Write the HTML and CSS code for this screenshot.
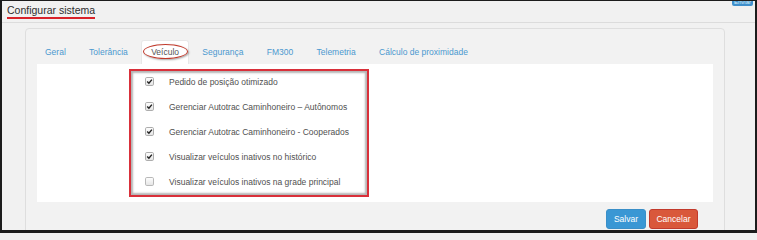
FILE: index.html
```html
<!DOCTYPE html>
<html lang="pt">
<head>
<meta charset="utf-8">
<title>Configurar sistema</title>
<link rel="stylesheet" href="styles.css">
</head>
<body>
<div class="frame">
  <header class="header">
    <h1 class="title"><span class="title-text">Configurar sistema</span></h1>
    <span class="top-btn">Enviar</span>
  </header>
  <section class="panel">
    <nav class="tabs">
      <a class="tab">Geral</a>
      <a class="tab">Tolerância</a>
      <a class="tab active">Veículo<span class="ring"></span></a>
      <a class="tab">Segurança</a>
      <a class="tab">FM300</a>
      <a class="tab">Telemetria</a>
      <a class="tab">Cálculo de proximidade</a>
    </nav>
    <div class="content">
      <div class="options">
        <label class="opt"><svg class="cb" viewBox="0 0 9 9" width="9" height="9"><defs><linearGradient id="g" x1="0" y1="0" x2="0" y2="1"><stop offset="0" stop-color="#ffffff"/><stop offset="1" stop-color="#e4e4e4"/></linearGradient></defs><rect x="0.5" y="0.5" width="8" height="8" rx="1.3" fill="url(#g)" stroke="#adadad"/><path d="M2.2 4.6 L3.9 6.3 L6.9 2.6" fill="none" stroke="#222" stroke-width="1.4"/></svg><span>Pedido de posição otimizado</span></label>
        <label class="opt"><svg class="cb" viewBox="0 0 9 9" width="9" height="9"><rect x="0.5" y="0.5" width="8" height="8" rx="1.3" fill="url(#g)" stroke="#adadad"/><path d="M2.2 4.6 L3.9 6.3 L6.9 2.6" fill="none" stroke="#222" stroke-width="1.4"/></svg><span>Gerenciar Autotrac Caminhoneiro – Autônomos</span></label>
        <label class="opt"><svg class="cb" viewBox="0 0 9 9" width="9" height="9"><rect x="0.5" y="0.5" width="8" height="8" rx="1.3" fill="url(#g)" stroke="#adadad"/><path d="M2.2 4.6 L3.9 6.3 L6.9 2.6" fill="none" stroke="#222" stroke-width="1.4"/></svg><span>Gerenciar Autotrac Caminhoneiro - Cooperados</span></label>
        <label class="opt"><svg class="cb" viewBox="0 0 9 9" width="9" height="9"><rect x="0.5" y="0.5" width="8" height="8" rx="1.3" fill="url(#g)" stroke="#adadad"/><path d="M2.2 4.6 L3.9 6.3 L6.9 2.6" fill="none" stroke="#222" stroke-width="1.4"/></svg><span>Visualizar veículos inativos no histórico</span></label>
        <label class="opt"><svg class="cb" viewBox="0 0 9 9" width="9" height="9"><rect x="0.5" y="0.5" width="8" height="8" rx="1.3" fill="url(#g)" stroke="#b8b8b8"/></svg><span>Visualizar veículos inativos na grade principal</span></label>
      </div>
    </div>
    <div class="actions">
      <button class="btn btn-save">Salvar</button>
      <button class="btn btn-cancel">Cancelar</button>
    </div>
  </section>
</div>
</body>
</html>
```
FILE: styles.css
```css
* { box-sizing: border-box; }
html, body { margin: 0; padding: 0; }
body {
  width: 757px;
  height: 233px;
  overflow: hidden;
  font-family: "Liberation Sans", Arial, sans-serif;
  background: #f1f1f1;
}
.frame {
  width: 757px;
  height: 233px;
  overflow: hidden;
  border-style: solid;
  border-color: #1c1c1c;
  border-width: 1px 2px 3px 2px;
  background: #f1f1f1;
}
.header {
  display: flex;
  justify-content: space-between;
  align-items: flex-start;
  height: 22px;
  border-bottom: 1px solid #dcdcdc;
  padding-left: 5px;
}
.title {
  margin: 3px 0 0 0;
  font-size: 10.5px;
  line-height: 12px;
  font-weight: normal;
  color: #2e2e2e;
}
.title-text {
  display: inline-block;
  padding-bottom: 1px;
  border-bottom: 2px solid #d8232a;
  line-height: 12px;
}
.top-btn {
  display: block;
  width: 21px;
  height: 5px;
  margin-right: 2px;
  overflow: hidden;
  background: #3f8fcc;
  color: #d8ecfa;
  font-size: 6px;
  line-height: 3px;
  text-align: center;
  border-radius: 0 0 2px 2px;
}
.panel {
  margin: 5px 30px 0 23px;
  height: 230px;
  border: 1px solid #dedede;
  border-radius: 4px;
  background: #f2f2f2;
  padding-top: 11px;
}
.tabs {
  display: flex;
  height: 24px;
  margin-left: 9px;
}
.tab {
  position: relative;
  display: block;
  height: 24px;
  padding: 0 9px;
  margin-right: 3.3px;
  font-size: 8.5px;
  line-height: 22px;
  color: #4b98cf;
  border: 1px solid transparent;
  border-bottom: 0;
  border-radius: 3px 3px 0 0;
  white-space: nowrap;
}
.tab.active {
  background: #fff;
  color: #555;
  border-color: #e8e8e8;
}
.ring {
  position: absolute;
  left: 1px;
  top: 3px;
  width: 45px;
  height: 15px;
  border: 1.5px solid #c0392b;
  border-radius: 50%;
  box-shadow: 1px 1px 2px rgba(0,0,0,0.35);
}
.content {
  margin: 0 11px;
  height: 138px;
  background: #fff;
  padding: 5px 0 0 92px;
}
.options {
  width: 240px;
  height: 128px;
  border: 2px solid #d9303a;
  box-shadow: inset 0 0 2px 2px #b5b5b5;
  padding: 0 14px 3px 14px;
  display: flex;
  flex-direction: column;
  gap: 4px;
}
.opt {
  display: flex;
  align-items: center;
  height: 21px;
  font-size: 8.5px;
  color: #505050;
  white-space: nowrap;
}
.cb {
  flex: none;
  margin-right: 15px;
}
.actions {
  display: flex;
  justify-content: flex-end;
  gap: 3px;
  margin-top: 7px;
  padding-right: 26px;
}
.btn {
  height: 20px;
  padding: 0;
  font-family: "Liberation Sans", Arial, sans-serif;
  font-size: 8.5px;
  color: #fff;
  border-radius: 3px;
  border: 1px solid transparent;
}
.btn-save {
  width: 40px;
  background: #3a97d4;
  border-color: #3a8fc8;
}
.btn-cancel {
  width: 49px;
  background: #d9583b;
  border-color: #c23a2c;
}
```
